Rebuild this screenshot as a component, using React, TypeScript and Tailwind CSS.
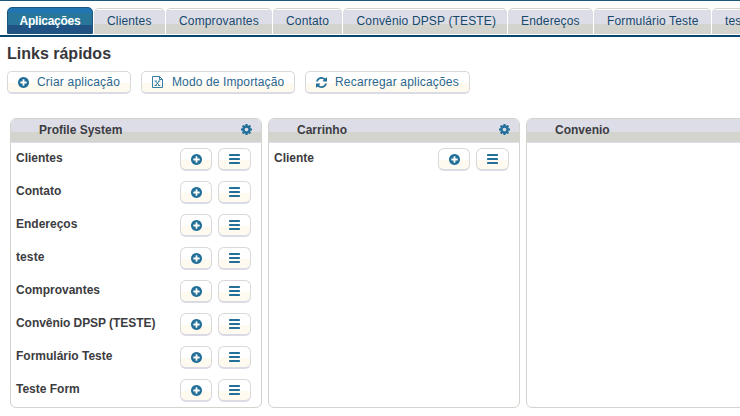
import type { ReactNode } from "react";

const tabs = [
  { label: "Clientes", box: "w-[71px]", text: "w-[45px]" },
  { label: "Comprovantes", box: "w-[106px]", text: "w-[80px]" },
  { label: "Contato", box: "w-[69px]", text: "w-[43px]" },
  { label: "Convênio DPSP (TESTE)", box: "w-[164px]", text: "w-[137px]" },
  { label: "Endereços", box: "w-[85px]", text: "w-[59px]" },
  { label: "Formulário Teste", box: "w-[117px]", text: "w-[91px]" },
  { label: "teste", box: "w-[60px]", text: "w-[34px]" },
];

function PlusIcon() {
  return (
    <svg width="11" height="11" viewBox="0 0 1536 1536" fill="currentColor">
      <path d="M1216 832v-128q0-26-19-45t-45-19h-256v-256q0-26-19-45t-45-19h-128q-26 0-45 19t-19 45v256h-256q-26 0-45 19t-19 45v128q0 26 19 45t45 19h256v256q0 26 19 45t45 19h128q26 0 45-19t19-45v-256h256q26 0 45-19t19-45zm320-64q0 209-103 385.500t-279.500 279.500-385.500 103-385.500-103-279.500-279.500-103-385.500 103-385.500 279.500-279.500 385.500-103 385.500 103 279.500 279.500 103 385.500z" />
    </svg>
  );
}

function CogIcon() {
  return (
    <svg width="11" height="11" viewBox="128 128 1536 1536" fill="currentColor" className="text-[#22709a]">
      <path d="M1152 896q0-106-75-181t-181-75-181 75-75 181 75 181 181 75 181-75 75-181zm512-109v222q0 12-8 23t-20 13l-185 28q-19 54-39 91 35 50 107 138 10 12 10 25t-9 23q-27 37-99 108t-94 71q-12 0-26-9l-138-108q-44 23-91 38-16 136-29 186-7 28-36 28h-222q-14 0-24.500-8.500t-11.500-21.500l-28-184q-49-16-90-37l-141 107q-10 9-25 9-14 0-25-11-126-114-165-168-7-10-7-23 0-12 8-23 15-21 51-66.500t54-70.500q-27-50-41-99l-183-27q-13-2-21-12.500t-8-23.500v-222q0-12 8-23t19-13l186-28q14-46 39-92-40-57-107-138-10-12-10-24 0-10 9-23 26-36 98.500-107.500t94.500-71.500q13 0 26 10l138 107q44-23 91-38 16-136 29-186 7-28 36-28h222q14 0 24.500 8.500t11.500 21.500l28 184q49 16 90 37l142-107q9-9 24-9 13 0 25 10 129 119 165 170 7 8 7 22 0 12-8 23-15 21-51 66.500t-54 70.500q26 50 41 98l183 28q13 2 21 12.500t8 23.500z" />
    </svg>
  );
}

function BarsIcon() {
  return (
    <svg width="11" height="10" viewBox="0 0 11 10" fill="currentColor">
      <rect y="0" width="11" height="2" rx=".4" />
      <rect y="4" width="11" height="2" rx=".4" />
      <rect y="8" width="11" height="2" rx=".4" />
    </svg>
  );
}

function RefreshIcon() {
  return (
    <svg width="11" height="11" viewBox="0 0 1536 1536" fill="currentColor">
      <path d="M1511 928q0 5-1 7-64 268-268 434.500t-478 166.500q-146 0-282.500-55t-243.500-157l-129 129q-19 19-45 19t-45-19-19-45v-448q0-26 19-45t45-19h448q26 0 45 19t19 45-19 45l-137 137q71 66 161 102t187 36q134 0 250-65t186-179q11-17 53-117 8-23 30-23h192q13 0 22.500 9.500t9.500 22.500zm25-800v448q0 26-19 45t-45 19h-448q-26 0-45-19t-19-45 19-45l138-138q-148-137-349-137-134 0-250 65t-186 179q-11 17-53 117-8 23-30 23h-199q-13 0-22.500-9.500t-9.500-22.500v-7q65-268 270-434.500t480-166.500q146 0 284 55.500t245 156.500l130-129q19-19 45-19t45 19 19 45z" />
    </svg>
  );
}

function ExcelIcon() {
  return (
    <svg width="11" height="12" viewBox="0 0 11 12" fill="none" stroke="currentColor">
      <path d="M.5.5H7.500L10.500 3.500V11.500H.5ZM7.500 .5V3.500H10.500" strokeWidth=".9" />
      <path d="M2.500 5H4.800M6.200 5H8.300M2.500 9.500H4.800M6.200 9.500H8.300M3.500 5L7.300 9.500M7.300 5L3.500 9.500" strokeWidth=".9" />
    </svg>
  );
}

const surface =
  "border border-[#d9d9dc] border-b-2 border-b-[#dadbe5] bg-[linear-gradient(#fff_0,#fff_54%,#fffaf0_54%)] text-[#22709a]";

function QuickLink({ icon, label, width, tracking }: { icon: ReactNode; label: string; width: string; tracking: string }) {
  return (
    <button className={`flex h-[23px] items-center rounded-[5px] pl-[10px] ${surface} ${width}`}>
      <span className="flex w-[19px] shrink-0 items-center">{icon}</span>
      <span className={`whitespace-nowrap leading-[20px] text-[#2a6890] ${tracking}`}>{label}</span>
    </button>
  );
}

function Panel({ title, rows, cog = true }: { title: string; rows: { name: string; tracking: string }[]; cog?: boolean }) {
  return (
    <section className="h-[290px] w-[252px] shrink-0 overflow-hidden rounded-[6px] border border-[#d3d4ce]">
      <header className="flex h-[24px] items-center justify-between border-b border-[#dcdde8] bg-[linear-gradient(#dcdde6_0,#dcdde6_57%,#d4d4ce_57%)] pr-[9px] pb-[2px] pl-[28px] font-bold text-[#3c3c40]">
        <span>{title}</span>
        {cog && <CogIcon />}
      </header>
      <ul className="pt-[5px]">
        {rows.map(({ name, tracking }) => (
          <li key={name} className="flex h-[33px] items-start pr-[10px] pl-[5px] font-bold text-[#3c3c40]">
            <span className={`grow whitespace-nowrap leading-[20px] ${tracking}`}>{name}</span>
            <button className={`mr-[6px] flex h-[23px] w-[32px] items-center justify-center rounded-[6px] ${surface}`}>
              <PlusIcon />
            </button>
            <button className={`flex h-[23px] w-[33px] items-center justify-center rounded-[6px] pb-px ${surface}`}>
              <BarsIcon />
            </button>
          </li>
        ))}
      </ul>
    </section>
  );
}

export default function App() {
  return (
    <main className="h-[416px] w-[740px] overflow-hidden bg-white font-['Liberation_Sans',Arial,sans-serif] text-[12px]">
      <div className="h-px bg-[#1f5877]" />
      <nav className="flex h-[36px] items-end gap-px border-b-2 border-[#05486f] pb-px pl-[7px]">
        <div className="flex h-[27px] w-[86px] shrink-0 items-center justify-center rounded-t-[5px] border border-[#1b5580] bg-[linear-gradient(#2075b2_0,#2075b2_18%,#28769a_18%,#28769a_66%,#205383_66%)] font-bold tracking-[-.25px] text-white">
          Aplicações
        </div>
        {tabs.map((tab) => (
          <div
            key={tab.label}
            className={`flex h-[26px] shrink-0 justify-center rounded-t-[5px] border-t border-[#d4d4cc] bg-[linear-gradient(#fff_0,#fff_1px,#dcdde6_1px,#dcdde6_60%,#d4d4ce_60%)] leading-[25px] text-[#16486b] ${tab.box}`}
          >
            <span className={`whitespace-nowrap tracking-[.15px] ${tab.text}`}>{tab.label}</span>
          </div>
        ))}
      </nav>
      <h1 className="mt-[7px] ml-[7px] h-[20px] text-[16px] leading-[20px] font-bold text-[#37373b]">Links rápidos</h1>
      <div className="mt-[7px] ml-[7px] flex gap-[10px]">
        <QuickLink icon={<PlusIcon />} label="Criar aplicação" width="w-[124px]" tracking="tracking-[.2px]" />
        <QuickLink icon={<ExcelIcon />} label="Modo de Importação" width="w-[154px]" tracking="ml-px tracking-[.12px]" />
        <QuickLink icon={<RefreshIcon />} label="Recarregar aplicações" width="w-[165px]" tracking="tracking-[.18px]" />
      </div>
      <div className="mt-[24px] ml-[10px] flex gap-[6px]">
        <Panel
          title="Profile System"
          rows={[
            { name: "Clientes", tracking: "tracking-[0px]" },
            { name: "Contato", tracking: "tracking-[0px]" },
            { name: "Endereços", tracking: "tracking-[0px]" },
            { name: "teste", tracking: "tracking-[.1px]" },
            { name: "Comprovantes", tracking: "tracking-[0px]" },
            { name: "Convênio DPSP (TESTE)", tracking: "tracking-[-.05px]" },
            { name: "Formulário Teste", tracking: "tracking-[0px]" },
            { name: "Teste Form", tracking: "tracking-[0px]" },
          ]}
        />
        <Panel title="Carrinho" rows={[{ name: "Cliente", tracking: "tracking-[0px]" }]} />
        <Panel title="Convenio" rows={[]} cog={false} />
      </div>
    </main>
  );
}
